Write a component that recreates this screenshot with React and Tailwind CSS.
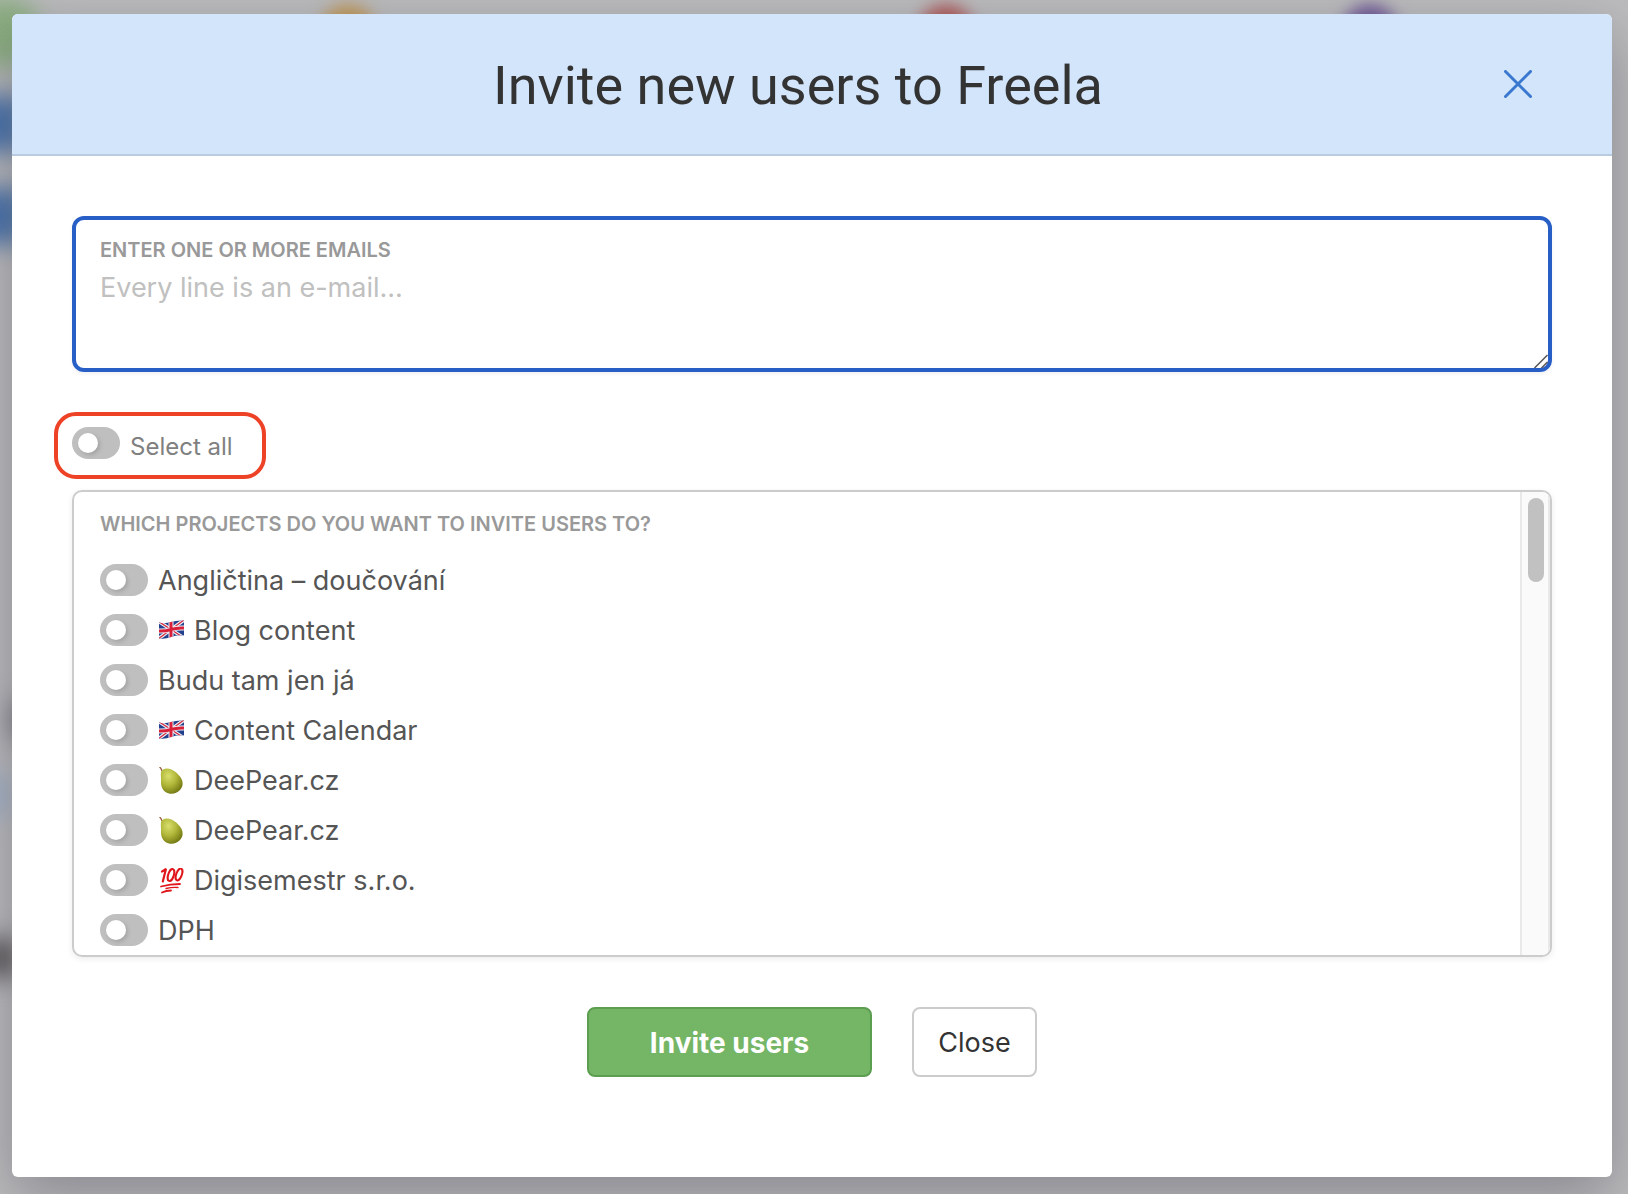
import { useState } from "react";

const FONT = "font-['Inter','Liberation_Sans',sans-serif]";

const FlagIcon = () => (
    <svg viewBox="0 0 26 26" className="size-[26px]" aria-hidden="true">
        <clipPath id="flag">
            <path d="M1 4.500Q7 6 13 4T26 2.500L26 17.500Q19 16.500 13 19T1 20.500Z" />
        </clipPath>
        <g clipPath="url(#flag)">
            <path d="M0 1h26v22H0z" fill="#22408c" />
            <path d="M0 3l26 17M0 21L26 2" stroke="#eef0f6" strokeWidth="3.500" />
            <path d="M0 3l26 17M0 21L26 2" stroke="#d52b3f" strokeWidth="1.300" />
            <path d="M13 1v22M0 13Q7 13.500 13 11.500T26 10" stroke="#eef0f6" strokeWidth="5" fill="none" />
            <path d="M13 1v22M0 13Q7 13.500 13 11.500T26 10" stroke="#d8203a" strokeWidth="3" fill="none" />
        </g>
    </svg>
);

const PearIcon = () => (
    <svg viewBox="0 0 26 28" className="h-7 w-[26px]" aria-hidden="true">
        <defs>
            <radialGradient id="pear" cx="0.35" cy="0.3" r="0.75">
                <stop offset="0" stopColor="#d8df6c" />
                <stop offset="0.5" stopColor="#b1b739" />
                <stop offset="1" stopColor="#737812" />
            </radialGradient>
        </defs>
        <path d="M1.500 0Q3 1 4 4" stroke="#9a5f45" strokeWidth="1.400" fill="none" />
        <path
            d="M3 5C4 1.500 9 .5 13.500 2.500c4 1.800 6 4 8.500 7 3.500 4.500 3.500 10 0 13.500-3.500 4-10 5-14.500 2-3.500-2.500-4.700-6.500-4.500-11C3.200 11 2.500 8.500 3 5z"
            fill="url(#pear)"
        />
    </svg>
);

const HundredIcon = () => (
    <svg viewBox="0 0 26 26" className="size-[26px]" fill="none" stroke="#e0161b" strokeLinecap="round" aria-hidden="true">
        <path d="M4 3.500Q6.500 2.500 8 .8L4.800 13.500" strokeWidth="2.200" />
        <ellipse cx="13" cy="7" rx="2.800" ry="6.200" transform="rotate(18 13 7)" strokeWidth="2" />
        <ellipse cx="21" cy="6.500" rx="2.800" ry="6.200" transform="rotate(20 21 6.500)" strokeWidth="2" />
        <path d="M3 18.500Q12 16 22 16" strokeWidth="1.800" />
        <path d="M8 20.500Q14 19 20 19.500" strokeWidth="1.300" />
        <path d="M4 24.500Q8 22.500 13 22.500" strokeWidth="1.800" />
    </svg>
);

const projects = [
    { id: 1, name: "Angličtina – doučování" },
    { id: 2, name: "Blog content", icon: FlagIcon },
    { id: 3, name: "Budu tam jen já" },
    { id: 4, name: "Content Calendar", icon: FlagIcon },
    { id: 5, name: "DeePear.cz", icon: PearIcon },
    { id: 6, name: "DeePear.cz", icon: PearIcon },
    { id: 7, name: "Digisemestr s.r.o.", icon: HundredIcon },
    { id: 8, name: "DPH" },
];

const Toggle = ({ id, checked, onChange }) => (
    <input
        id={id}
        type="checkbox"
        checked={checked}
        onChange={onChange}
        className="h-8 w-12 shrink-0 appearance-none rounded-full bg-[#bfbfbf] p-1.5 before:block before:size-5 before:rounded-full before:bg-white before:shadow-[2px_2px_4px_rgba(0,0,0,0.15)] checked:bg-[#75b666] checked:before:ml-4"
    />
);

// Dimmed, out of focus page behind the dialog
const Backdrop = () => (
    <div className="absolute inset-0 overflow-hidden bg-[#bcbcbe]" aria-hidden="true">
        <div className="absolute -left-8 -top-1 size-18 rounded-full bg-[#8cae82] blur-md" />
        <div className="absolute -left-10 top-24 h-14 w-16 bg-[#4e76ac] blur-md" />
        <div className="absolute -left-10 top-[188px] h-14 w-16 bg-[#4e76ac] blur-md" />
        <div className="absolute top-1 left-80 size-14 rounded-full bg-[#c09a5c] blur-[8px]" />
        <div className="absolute top-1 left-[918px] size-14 rounded-full bg-[#b05e5e] blur-[8px]" />
        <div className="absolute top-1 left-[1342px] size-14 rounded-full bg-[#735c98] blur-[8px]" />
        <div className="absolute left-2 top-[700px] h-10 w-8 bg-[#85858d] blur-md" />
        <div className="absolute -left-6 top-[775px] h-10 w-8 bg-[#9fb0c8] blur-md" />
        <div className="absolute -left-4 top-[938px] h-10 w-8 bg-[#5a5658] blur-md" />
    </div>
);

const App = () => {
    const [emails, setEmails] = useState("");
    const [selected, setSelected] = useState([]);

    const toggleProject = (id) => {
        setSelected(selected.includes(id) ? selected.filter((p) => p !== id) : [...selected, id]);
    };

    const allSelected = selected.length === projects.length;

    const toggleAll = () => {
        setSelected(allSelected ? [] : projects.map((p) => p.id));
    };

    return (
        <div className={`relative min-h-screen overflow-hidden pt-3.5 pr-4 pb-[17px] pl-3 ${FONT}`}>
            <Backdrop />
            <div
                role="dialog"
                aria-labelledby="dialog-title"
                className="relative rounded-md bg-white pb-25 shadow-[0_20px_60px_rgba(0,0,20,0.28)]"
            >
                <header className="flex items-center rounded-t-md border-b-2 border-[#b9cbdf] bg-[#d3e5fa] py-[34px] pr-20 pl-20">
                    <h1
                        id="dialog-title"
                        className="flex-1 pt-1 text-center font-['Roboto','Inter',sans-serif] text-[54px] leading-[68px] text-[#333]"
                    >
                        Invite new users to Freela
                    </h1>
                    <button type="button" aria-label="Close dialog">
                        <svg viewBox="0 0 28 28" className="size-7" fill="none" stroke="#3a78d0" strokeWidth="3" strokeLinecap="round">
                            <path d="M1.500 1.500l25 25M26.500 1.500l-25 25" />
                        </svg>
                    </button>
                </header>

                <form className="px-15 pt-15" onSubmit={(e) => e.preventDefault()}>
                    <div className="relative">
                        <label htmlFor="emails" className="absolute top-5 left-7 text-[20px] leading-7 font-semibold text-[#999]">
                            ENTER ONE OR MORE EMAILS
                        </label>
                        <textarea
                            id="emails"
                            value={emails}
                            onChange={(e) => setEmails(e.target.value)}
                            placeholder="Every line is an e-mail..."
                            className="block h-39 w-full rounded-xl border-4 border-[#275fc6] px-6 pt-[50px] text-[27px] leading-9 text-[#333] shadow-[0_2px_4px_rgba(0,0,0,0.06)] outline-none placeholder:text-[#c0c0c0] [&::-webkit-resizer]:bg-transparent"
                        />
                        {/* Resize grip */}
                        <svg
                            viewBox="0 0 14 14"
                            className="pointer-events-none absolute right-1 bottom-1 size-3.5"
                            stroke="#555"
                            strokeWidth="1.500"
                            aria-hidden="true"
                        >
                            <path d="M.5 14L13.500 1M7.500 14L13.500 8" />
                        </svg>
                    </div>

                    <div className="mt-10 -ml-[18px] flex h-[67px] w-[212px] items-start gap-2.5 rounded-[22px] border-4 border-[#ee4227] pt-[11px] pl-3.5">
                        <Toggle id="select-all" checked={allSelected} onChange={toggleAll} />
                        <label htmlFor="select-all" className="pt-0.5 text-[24px] leading-9 text-[#808080]">
                            Select all
                        </label>
                    </div>

                    <div className="mt-[11px] flex h-[467px] overflow-hidden rounded-[10px] border-2 border-[#ccc] shadow-[0_2px_6px_rgba(0,0,0,0.08)]">
                        <fieldset className="min-w-0 flex-1 overflow-hidden px-[26px]">
                            <legend className="pt-[18px] pb-[17px] text-[20px] leading-7 font-semibold text-[#999]">
                                WHICH PROJECTS DO YOU WANT TO INVITE USERS TO?
                            </legend>
                            {projects.map((project) => (
                                <div key={project.id} className="flex h-[50px] items-center gap-2.5">
                                    <Toggle
                                        id={`project-${project.id}`}
                                        checked={selected.includes(project.id)}
                                        onChange={() => toggleProject(project.id)}
                                    />
                                    <label
                                        htmlFor={`project-${project.id}`}
                                        className="flex items-center gap-2.5 pt-0.5 text-[27px] leading-9 text-[#555]"
                                    >
                                        {project.icon && <project.icon />}
                                        {project.name}
                                    </label>
                                </div>
                            ))}
                        </fieldset>
                        <div className="w-[30px] shrink-0 border-x-2 border-[#e9e9e9] bg-[#fafafa] px-1.5 pt-1.5">
                            <div className="h-21 w-4 rounded-full bg-[#c1c1c1]" />
                        </div>
                    </div>

                    <div className="mt-[50px] flex justify-center gap-10">
                        <button
                            type="submit"
                            className="h-[70px] w-[285px] rounded-lg border-2 border-[#5c9e50] bg-[#75b666] pt-0.5 text-[28px] font-bold text-white"
                        >
                            Invite users
                        </button>
                        <button
                            type="button"
                            className="h-[70px] w-[125px] rounded-lg border-2 border-[#ccc] bg-white pt-0.5 text-[27px] text-[#333]"
                        >
                            Close
                        </button>
                    </div>
                </form>
            </div>
        </div>
    );
};

export default App;
